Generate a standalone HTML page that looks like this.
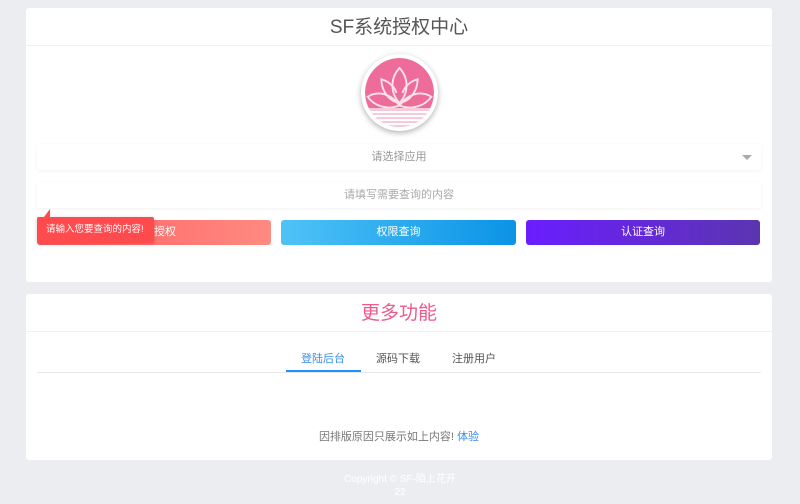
<!DOCTYPE html>
<html><head><meta charset="utf-8"><style>
*{margin:0;padding:0;box-sizing:border-box}
body{width:800px;height:504px;background:#ebedf1;font-family:"Liberation Sans","Noto Sans CJK SC",sans-serif;position:relative;overflow:hidden}
.card{position:absolute;left:26px;width:746px;background:#fff;border-radius:3px}
.abs{position:absolute}
.field{position:absolute;left:11px;width:724px;height:26px;background:#fff;box-shadow:0 1px 4px rgba(0,0,0,.06);border-radius:3px;text-align:center;font-size:11px;color:#aaa;line-height:26px}
.btn{position:absolute;top:212px;height:25px;border-radius:3px;color:#fff;font-size:11px;text-align:center;line-height:25px}
</style></head><body>
<div class="card" style="top:8px;height:274px">
 <div class="abs" style="left:0;top:0;width:746px;height:38px;border-bottom:1px solid #f0f0f0;text-align:center;font-size:19px;line-height:40px;color:#555">SF系统授权中心</div>
 <div class="abs" style="left:335px;top:46px;width:77px;height:77px;border-radius:50%;background:#fff;box-shadow:0 2px 6px rgba(0,0,0,.3);padding:4px">
  <svg width="69" height="69" viewBox="0 0 69 69" style="display:block;border-radius:50%">
   <defs><clipPath id="c"><circle cx="34.5" cy="34.5" r="34.5"/></clipPath></defs>
   <g clip-path="url(#c)">
    <rect width="69" height="69" fill="#ee6c99"/>
    <rect y="50" width="69" height="19" fill="#f8c9d9"/>
    <rect y="53" width="69" height="2" fill="#fff"/>
    <rect y="57" width="69" height="2" fill="#fff"/>
    <rect y="61" width="69" height="2" fill="#fff"/>
    <rect y="65" width="69" height="2" fill="#fff"/>
    <g fill="none" stroke="#fde4ec" stroke-width="1.5" transform="translate(34.5 30) scale(1.25) translate(-34.5 -30)">
     <path d="M34.5 14 C27 22 27 34 34.5 42 C42 34 42 22 34.5 14Z"/>
     <path d="M34.5 42 C24 40 20 30 20 23 C27 25 31 30 32 34"/>
     <path d="M34.5 42 C45 40 49 30 49 23 C42 25 38 30 37 34"/>
     <path d="M34.5 44 C24 48 14 44 9 37 C17 32 27 34 34.5 44Z"/>
     <path d="M34.5 44 C45 48 55 44 60 37 C52 32 42 34 34.5 44Z"/>
    </g>
   </g>
  </svg>
 </div>
 <div class="field" style="top:136px;color:#999">请选择应用<span style="position:absolute;right:9px;top:11px;border:5px solid transparent;border-top:5px solid #aaa;border-bottom:0"></span></div>
 <div class="field" style="top:174px">请填写需要查询的内容</div>
 <div class="btn" style="left:11px;width:234px;background:linear-gradient(90deg,#ff5e62,#ff8a80)">查询授权</div>
 <div class="btn" style="left:255px;width:235px;background:linear-gradient(90deg,#4fc3f7,#0a93e6)">权限查询</div>
 <div class="btn" style="left:500px;width:234px;background:linear-gradient(90deg,#6a1eff,#5b35b0)">认证查询</div>
 <div class="abs" style="left:11px;top:209px;width:117px;height:26px;background:#ff4a4e;border-radius:2px;color:#fff;font-size:9.5px;line-height:26px;padding-left:9px;box-shadow:0 1px 4px rgba(0,0,0,.2)">请输入您要查询的内容!</div>
 <div class="abs" style="left:18px;top:201px;width:0;height:0;border-left:6px solid transparent;border-bottom:8px solid #ff4a4e"></div>
</div>
<div class="card" style="top:294px;height:166px">
 <div class="abs" style="left:0;top:0;width:746px;height:38px;border-bottom:1px solid #f0f0f0;text-align:center;font-size:19px;line-height:40px;color:#ee5a8a">更多功能</div>
 <div class="abs" style="left:11px;top:78px;width:724px;height:1px;background:#e8e8e8"></div>
 <div class="abs" style="left:260px;top:76px;width:75px;height:2px;background:#1e90ff"></div>
 <div class="abs" style="left:275px;top:56px;font-size:11px;color:#3a8ee6">登陆后台</div>
 <div class="abs" style="left:350px;top:56px;font-size:11px;color:#555">源码下载</div>
 <div class="abs" style="left:426px;top:56px;font-size:11px;color:#555">注册用户</div>
 <div class="abs" style="left:0;top:134px;width:746px;text-align:center;font-size:11px;color:#777">因排版原因只展示如上内容! <span style="color:#3a8ee6">体验</span></div>
</div>
<div class="abs" style="left:0;top:473px;width:800px;text-align:center;font-size:10px;color:#fff;line-height:13px">Copyright © SF-陌上花开<br>22</div>
</body></html>
